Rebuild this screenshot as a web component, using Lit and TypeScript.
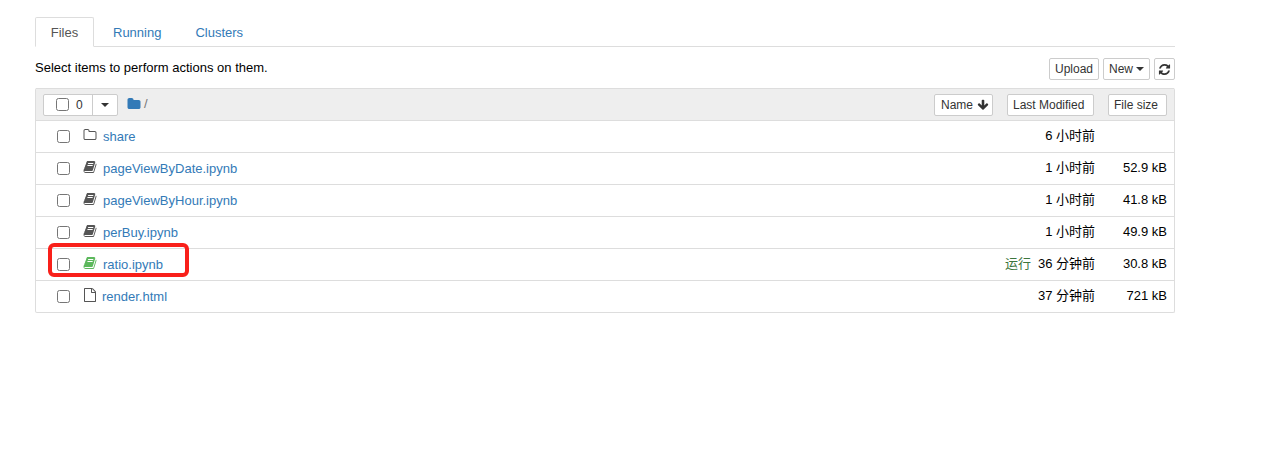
import { LitElement, html, css } from "lit";
import { customElement } from "lit/decorators.js";

const P = {
  book: "M1703 478q40 57 18 129l-275 906q-19 64-76.500 107.500t-122.500 43.500h-923q-77 0-148.500-53.500t-99.500-131.500q-24-67-2-127 0-4 3-27t4-37q1-8-3-21.500t-3-19.500q2-11 8-21t16.500-23.500 16.500-23.500q23-38 45-91.500t30-91.500q3-10 .5-30t-.5-28q3-11 17-28t17-23q21-36 42-92t25-90q1-9-2.500-32t.5-28q4-13 22-30.500t22-22.500q19-26 42.500-84.500t27.500-96.500q1-8-3-25.500t-2-26.500q2-8 9-18t18-23 17-21q8-12 16.500-30.500t15-35 16-36 19.500-32 26.500-23.500 36-11.500 47.500 5.500l-1 3q38-9 51-9h761q74 0 114 56t18 130l-274 906q-36 119-71.500 153.500t-128.500 34.500h-869q-27 0-38 15-11 16-1 43 24 70 144 70h923q29 0 56-15.500t35-41.500l300-987q7-22 5-57 38 15 59 43zm-1064 2q-4 13 2 22.500t20 9.500h608q13 0 25.500-9.500t16.500-22.500l21-64q4-13-2-22.500t-20-9.500h-608q-13 0-25.500 9.500t-16.500 22.500zm-83 256q-4 13 2 22.500t20 9.500h608q13 0 25.500-9.500t16.500-22.500l21-64q4-13-2-22.500t-20-9.500h-608q-13 0-25.500 9.500t-16.500 22.500z",
  folderO: "M1600 1312v-704q0-40-28-68t-68-28h-704q-40 0-68-28t-28-68v-64q0-40-28-68t-68-28h-320q-40 0-68 28t-28 68v960q0 40 28 68t68 28h1216q40 0 68-28t28-68zm128-704v704q0 92-66 158t-158 66h-1216q-92 0-158-66t-66-158v-960q0-92 66-158t158-66h320q92 0 158 66t66 158v32h672q92 0 158 66t66 158z",
  folder: "M1728 608v704q0 92-66 158t-158 66h-1216q-92 0-158-66t-66-158v-960q0-92 66-158t158-66h320q92 0 158 66t66 158v32h672q92 0 158 66t66 158z",
  file: "M1596 380q28 28 48 76t20 88v1152q0 40-28 68t-68 28h-1344q-40 0-68-28t-28-68v-1600q0-40 28-68t68-28h896q40 0 88 20t76 48zm-444-244v376h376q-10-29-22-41l-313-313q-12-12-41-22zm384 1528v-1024h-416q-40 0-68-28t-28-68v-416h-768v1536h1280z",
  refresh: "M1639 1056q0 5-1 7-64 268-268 434.500t-478 166.500q-146 0-282.500-55t-243.500-157l-129 129q-19 19-45 19t-45-19-19-45v-448q0-26 19-45t45-19h448q26 0 45 19t19 45-19 45l-137 137q71 66 161 102t187 36q134 0 250-65t186-179q11-17 53-117 8-23 30-23h192q13 0 22.500 9.500t9.500 22.500zm25-800v448q0 26-19 45t-45 19h-448q-26 0-45-19t-19-45 19-45l138-138q-148-137-349-137-134 0-250 65t-186 179q-11 17-53 117-8 23-30 23h-199q-13 0-22.500-9.500t-9.500-22.500v-7q65-268 270-434.500t480-166.500q146 0 284 55.500t245 156.500l130-129q19-19 45-19t45 19 19 45z",
  arrow: "M1675 832q0 53-37 90l-651 652q-39 37-91 37-53 0-90-37l-651-652q-38-36-38-90 0-53 38-91l74-75q39-37 91-37 53 0 90 37l294 294v-704q0-52 38-90t90-38h128q52 0 90 38t38 90v704l294-294q37-37 90-37 52 0 91 37l75 75q37 39 37 91z",
};

const icon = (d: string, size: number, cls = "") =>
  html`<svg class="ico ${cls}" viewBox="0 0 1792 1792" width="${size}" height="${size}"><path d="${d}" fill="currentColor"/></svg>`;

interface Row { name: string; icon: any; time: string; size: string; running?: boolean; kind: string }
const rows: Row[] = [
  { name: "share", icon: icon(P.folderO, 14, "plain"), time: "6 小时前", size: "", kind: "" },
  { name: "pageViewByDate.ipynb", icon: icon(P.book, 14, "nb"), time: "1 小时前", size: "52.9 kB", kind: "" },
  { name: "pageViewByHour.ipynb", icon: icon(P.book, 14, "nb"), time: "1 小时前", size: "41.8 kB", kind: "" },
  { name: "perBuy.ipynb", icon: icon(P.book, 14, "nb"), time: "1 小时前", size: "49.9 kB", kind: "" },
  { name: "ratio.ipynb", icon: icon(P.book, 14, "run"), time: "36 分钟前", size: "30.8 kB", running: true, kind: "" },
  { name: "render.html", icon: icon(P.file, 14, "plain"), time: "37 分钟前", size: "721 kB", kind: "tight" },
];

@customElement("app-root")
export class AppRoot extends LitElement {
  static styles = css`
    :host { display: block; font: 13px/18px Arial, "Liberation Sans", "Noto Sans CJK SC", sans-serif; color: #000; background: #fff; min-height: 453px; }
    * { box-sizing: border-box; }
    a { color: #337ab7; text-decoration: none; }
    .page { width: 1140px; margin-left: 35px; padding-top: 17px; }
    .tabs { display: flex; height: 30px; border-bottom: 1px solid #ddd; }
    .tab { height: 30px; padding: 6px 16px 4px; border: 1px solid transparent; }
    .tab.first { margin-left: 2px; }
    .tab.active { color: #555; background: #fff; border-color: #ddd #ddd #fff; border-radius: 2px 2px 0 0; width: 59px; padding: 6px 0 4px; text-align: center; }
    .tools { display: flex; align-items: center; justify-content: space-between; height: 41px; padding-top: 1px; }
    .btns { display: flex; gap: 4px; margin-top: 2px; }
    .btn { display: flex; align-items: center; justify-content: center; height: 22px; background: #fff; border: 1px solid #ccc; border-radius: 2px; font-size: 12px; color: #333; line-height: 18px; }
    .upload { width: 50px; }
    .new { width: 47px; gap: 3px; }
    .reload { width: 21px; }
    .by-name { width: 59px; gap: 4px; justify-content: flex-start; padding-left: 6px; }
    .by-time { width: 87px; justify-content: flex-start; padding-left: 5px; }
    .by-size { width: 59px; justify-content: flex-start; padding-left: 5px; }
    .caret { display: inline-block; width: 0; height: 0; border-top: 4px solid #333; border-left: 4px solid transparent; border-right: 4px solid transparent; }
    .list { border: 1px solid #ddd; border-top: 0; border-radius: 2px; position: relative; }
    .head { display: flex; align-items: center; height: 33px; background: #eee; border-top: 1px solid #ddd; border-bottom: 1px solid #ddd; padding: 0 7px; }
    .group { display: flex; height: 22px; background: #fff; border: 1px solid #ccc; border-radius: 2px; margin-right: 9px; }
    .group-a { display: flex; align-items: center; width: 49px; padding-left: 12px; gap: 7px; border-right: 1px solid #ccc; font-size: 12px; color: #333; }
    .group-b { display: flex; align-items: center; justify-content: center; width: 24px; }
    .crumb { display: flex; align-items: center; gap: 3px; color: #337ab7; margin-top: -2px; flex: 1; }
    .crumb span { color: #777; }
    .sort { margin-left: 14px; }
    .row { display: flex; align-items: center; height: 32px; padding-right: 7px; border-bottom: 1px solid #ddd; }
    .row:last-child { border-bottom: 0; height: 31px; }
    .check { appearance: none; display: block; width: 13px; height: 13px; margin: 0; background: #fff; border: 1px solid #767676; border-radius: 2.5px; flex: none; }
    .row .check { margin-left: 21px; margin-right: 13px; }
    .ico { flex: none; display: block; }
    .slot { width: 14px; margin-right: 6px; display: flex; justify-content: center; margin-top: -3px; }
    .slot.tight { margin-right: 5px; margin-top: -4px; }
    .nb, .plain { color: #555; }
    .run { color: #5cb85c; }
    .name { flex: 1; margin-top: 1px; }
    .status { color: #3c763d; margin-right: 7px; margin-top: -2px; }
    .time { text-align: right; margin-top: -2px; }
    .size { width: 72px; text-align: right; margin-top: -2px; }
    .mark { position: absolute; left: 12px; top: 155px; width: 141px; height: 34px; border: 4px solid #f9201a; border-radius: 6px; pointer-events: none; }
  `;

  render() {
    return html`<div class="page">
      <div class="tabs">
        <div class="tab active">Files</div>
        <a class="tab first" href="#">Running</a>
        <a class="tab" href="#">Clusters</a>
      </div>
      <div class="tools">
        <div>Select items to perform actions on them.</div>
        <div class="btns">
          <div class="btn upload">Upload</div>
          <div class="btn new">New <i class="caret"></i></div>
          <div class="btn reload">${icon(P.refresh, 13)}</div>
        </div>
      </div>
      <div class="list">
        <div class="head">
          <div class="group">
            <div class="group-a"><input class="check" type="checkbox" /><span>0</span></div>
            <div class="group-b"><i class="caret"></i></div>
          </div>
          <div class="crumb">
            ${icon(P.folder, 14)}
            <span>/</span>
          </div>
          <div class="btn sort by-name">Name ${icon(P.arrow, 12)}</div>
          <div class="btn sort by-time">Last Modified</div>
          <div class="btn sort by-size">File size</div>
        </div>
        <div>
        ${rows.map(r => html`<div class="row">
          <input class="check" type="checkbox" />
          <div class="slot ${r.kind}">${r.icon}</div>
          <a class="name" href="#">${r.name}</a>
          ${r.running ? html`<span class="status">运行</span>` : ""}
          <div class="time">${r.time}</div>
          <div class="size">${r.size}</div>
        </div>`)}
        </div>
        <div class="mark"></div>
      </div>
    </div>`;
  }
}
